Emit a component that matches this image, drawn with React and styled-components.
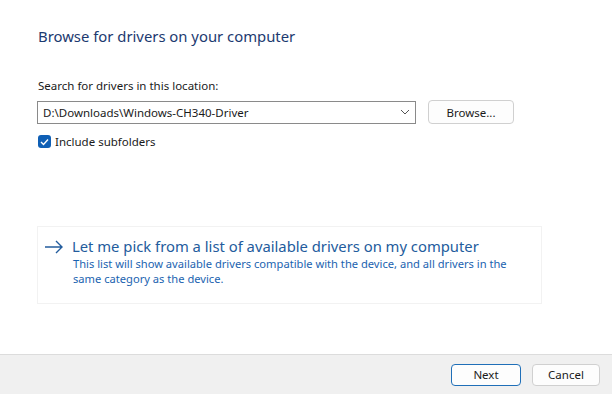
import styled, { createGlobalStyle } from "styled-components";

const Global = createGlobalStyle`
  * { box-sizing: border-box; }
  html, body { margin: 0; padding: 0; background: #ffffff; }
  body { font-family: "Noto Sans", "Open Sans", sans-serif; }
`;

const Window = styled.div`
  width: 612px;
  height: 394px;
  display: flex;
  flex-direction: column;
  background: #ffffff;
  overflow: hidden;
`;

const Body = styled.div`
  flex: 1;
  padding: 25px 0 0 37px;
  display: flex;
  flex-direction: column;
`;

const Title = styled.h1`
  margin: 0;
  font-size: 14.85px;
  font-weight: 400;
  color: #1c3a70;
  line-height: 22px;
  padding-left: 1px;
`;

const Label = styled.div`
  margin-top: 31px;
  font-size: 11.5px;
  color: #1a1a1a;
  line-height: 16px;
  padding-left: 1px;
`;

const Row = styled.div`
  display: flex;
  align-items: center;
  margin-top: 6px;
  gap: 12px;
`;

const Combo = styled.div`
  width: 379px;
  height: 23px;
  border: 1px solid #8a8a8a;
  display: flex;
  align-items: center;
  justify-content: space-between;
  padding: 0 5px 0 5px;
  font-size: 11.5px;
  color: #1a1a1a;
`;

const Button = styled.button`
  font-family: inherit;
  font-size: 11.5px;
  color: #1a1a1a;
  background: #fdfdfd;
  border: 1px solid ${p => (p.primary ? "#1f6fb8" : "#d0d0d0")};
  border-radius: 4px;
  width: ${p => p.w}px;
  height: ${p => p.h}px;
  padding: 0;
`;

const Check = styled.label`
  display: flex;
  align-items: center;
  gap: 4px;
  margin-top: 10px;
  font-size: 11.5px;
  color: #1a1a1a;
  padding-left: 1px;
`;

const Box = styled.span`
  width: 13px;
  height: 13px;
  border-radius: 3px;
  background: #0f5fb5;
  display: flex;
  align-items: center;
  justify-content: center;
`;

const LinkCard = styled.div`
  margin-top: 77px;
  width: 505px;
  height: 78px;
  border: 1px solid #f2f2f2;
  display: flex;
  padding: 9px 0 0 6px;
  gap: 8px;
`;

const LinkText = styled.div`
  display: flex;
  flex-direction: column;
`;

const LinkHead = styled.div`
  font-size: 14.8px;
  line-height: 20px;
  color: #235c9d;
`;

const LinkSub = styled.div`
  font-size: 11.15px;
  line-height: 15px;
  color: #1b63b0;
  width: 450px;
  padding-left: 1px;
`;

const Footer = styled.div`
  height: 40px;
  border-top: 1px solid #dcdcdc;
  background: #f0f0f0;
  display: flex;
  justify-content: flex-end;
  align-items: center;
  gap: 11px;
  padding-right: 12px;
`;

const Chevron = () => (
  <svg width="10" height="6" viewBox="0 0 10 6">
    <path d="M1 1 L5 5 L9 1" fill="none" stroke="#555" strokeWidth="1" />
  </svg>
);

const Tick = () => (
  <svg width="9" height="8" viewBox="0 0 9 8">
    <path d="M1 4 L3.5 6.5 L8 1.5" fill="none" stroke="#fff" strokeWidth="1.4" />
  </svg>
);

const Arrow = () => (
  <svg width="20" height="14" viewBox="0 0 20 14" style={{ marginTop: 4 }}>
    <path d="M1 7 H18 M12 1 L18 7 L12 13" fill="none" stroke="#235c9d" strokeWidth="1.4" />
  </svg>
);

export default function App() {
  return (
    <Window>
      <Global />
      <Body>
        <Title>Browse for drivers on your computer</Title>
        <Label>Search for drivers in this location:</Label>
        <Row>
          <Combo>
            <span>D:\Downloads\Windows-CH340-Driver</span>
            <Chevron />
          </Combo>
          <Button w={86} h={24}>Browse...</Button>
        </Row>
        <Check>
          <Box><Tick /></Box>
          Include subfolders
        </Check>
        <LinkCard>
          <Arrow />
          <LinkText>
            <LinkHead>Let me pick from a list of available drivers on my computer</LinkHead>
            <LinkSub>
              This list will show available drivers compatible with the device, and all drivers in the
              same category as the device.
            </LinkSub>
          </LinkText>
        </LinkCard>
      </Body>
      <Footer>
        <Button primary w={70} h={22}>Next</Button>
        <Button w={68} h={22}>Cancel</Button>
      </Footer>
    </Window>
  );
}
